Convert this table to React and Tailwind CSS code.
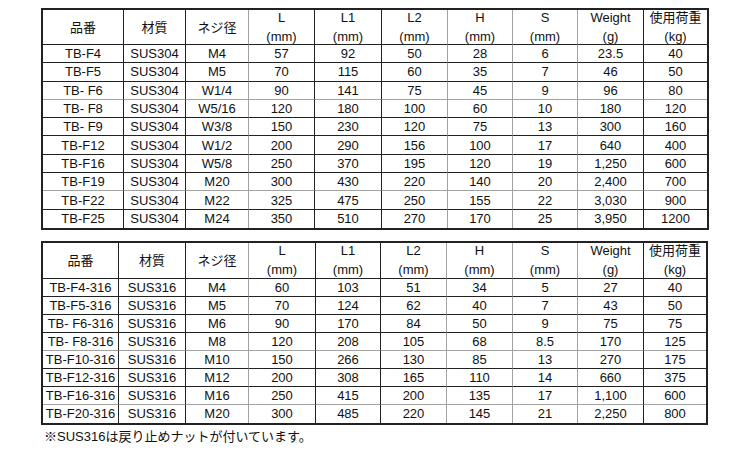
import React from "react";

const H1 = [
  ["品番"],
  ["材質"],
  ["ネジ径"],
  ["L", "(mm)"],
  ["L1", "(mm)"],
  ["L2", "(mm)"],
  ["H", "(mm)"],
  ["S", "(mm)"],
  ["Weight", "(g)"],
  ["使用荷重", "(kg)"],
];

const rows1 = [
  ["TB-F4", "SUS304", "M4", "57", "92", "50", "28", "6", "23.5", "40"],
  ["TB-F5", "SUS304", "M5", "70", "115", "60", "35", "7", "46", "50"],
  ["TB- F6", "SUS304", "W1/4", "90", "141", "75", "45", "9", "96", "80"],
  ["TB- F8", "SUS304", "W5/16", "120", "180", "100", "60", "10", "180", "120"],
  ["TB- F9", "SUS304", "W3/8", "150", "230", "120", "75", "13", "300", "160"],
  ["TB-F12", "SUS304", "W1/2", "200", "290", "156", "100", "17", "640", "400"],
  ["TB-F16", "SUS304", "W5/8", "250", "370", "195", "120", "19", "1,250", "600"],
  ["TB-F19", "SUS304", "M20", "300", "430", "220", "140", "20", "2,400", "700"],
  ["TB-F22", "SUS304", "M22", "325", "475", "250", "155", "22", "3,030", "900"],
  ["TB-F25", "SUS304", "M24", "350", "510", "270", "170", "25", "3,950", "1200"],
];

const rows2 = [
  ["TB-F4-316", "SUS316", "M4", "60", "103", "51", "34", "5", "27", "40"],
  ["TB-F5-316", "SUS316", "M5", "70", "124", "62", "40", "7", "43", "50"],
  ["TB- F6-316", "SUS316", "M6", "90", "170", "84", "50", "9", "75", "75"],
  ["TB- F8-316", "SUS316", "M8", "120", "208", "105", "68", "8.5", "170", "125"],
  ["TB-F10-316", "SUS316", "M10", "150", "266", "130", "85", "13", "270", "175"],
  ["TB-F12-316", "SUS316", "M12", "200", "308", "165", "110", "14", "660", "375"],
  ["TB-F16-316", "SUS316", "M16", "250", "415", "200", "135", "17", "1,100", "600"],
  ["TB-F20-316", "SUS316", "M20", "300", "485", "220", "145", "21", "2,250", "800"],
];

const grayCols = [2, 5, 6, 7];

function Table({ rows, cols, grayRows, headH, rowH, width }) {
  return (
    <div className={`border-2 border-[#222] ${width}`}>
      <div className={`grid ${cols}`}>
        {H1.map((h, i) => (
          <div
            key={"h" + i}
            className={`${headH} flex flex-col items-center justify-center border-b border-b-[#222] leading-[19px] ${
              i === 9 ? "" : grayCols.includes(i) ? "border-r border-r-[#a3a3a3]" : "border-r border-r-[#222]"
            }`}
          >
            {h.map((t, k) => (
              <span key={k}>{t}</span>
            ))}
          </div>
        ))}
        {rows.map((r, ri) =>
          r.map((c, ci) => (
            <div
              key={ri + "-" + ci}
              className={`${rowH} flex items-center justify-center leading-none whitespace-nowrap ${
                ri === rows.length - 1
                  ? ""
                  : grayRows.includes(ri)
                  ? "border-b border-b-[#a3a3a3]"
                  : "border-b border-b-[#222]"
              } ${
                ci === 9 ? "" : grayCols.includes(ci) ? "border-r border-r-[#a3a3a3]" : "border-r border-r-[#222]"
              }`}
            >
              {c}
            </div>
          ))
        )}
      </div>
    </div>
  );
}

export default function App() {
  return (
    <div className="w-[750px] h-[450px] bg-white overflow-hidden pl-[41px] pt-[8px] text-[13px] text-[#111] font-['Liberation_Sans','Noto_Sans_CJK_JP',sans-serif]">
      <Table
        rows={rows1}
        cols="grid-cols-[81px_62px_63px_66px_67px_66px_65px_65px_66px_63px]"
        grayRows={[2, 7]}
        headH="h-[35px]"
        rowH="h-[18.3px]"
        width="w-[668px]"
      />
      <div className="mt-[11px]">
        <Table
          rows={rows2}
          cols="grid-cols-[76px_67px_63px_67px_65px_66px_66px_65px_66px_62px]"
          grayRows={[3, 6]}
          headH="h-[36px]"
          rowH="h-[18px]"
          width="w-[667px]"
        />
      </div>
      <div className="mt-[4px] pl-[3px] leading-[16px]">※SUS316は戻り止めナットが付いています。</div>
    </div>
  );
}
